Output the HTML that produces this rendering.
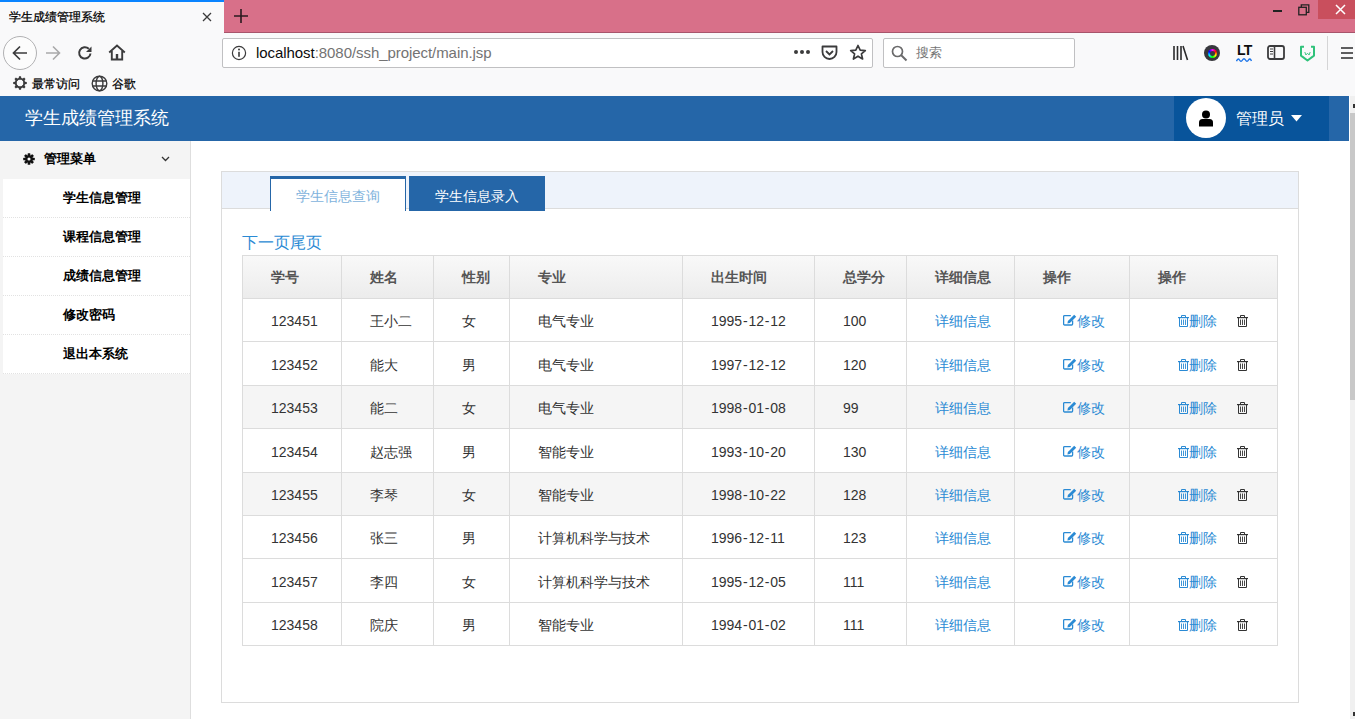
<!DOCTYPE html>
<html><head><meta charset="utf-8">
<style>
*{box-sizing:border-box;margin:0;padding:0}
html,body{width:1355px;height:719px;overflow:hidden;background:#fff;font-family:"Liberation Sans",sans-serif;position:relative}
.abs{position:absolute;white-space:nowrap}
svg{display:block}
.hd{background:linear-gradient(#f9f9f9,#ececec)}
.vl{width:1px;background:#dcdcdc}
.hl{height:1px;background:#dcdcdc}
.th{font-size:14px;font-weight:bold;color:#555}
.td{font-size:14px;color:#333}
.lk{color:#2a8ad4}
.ic{display:inline-block;vertical-align:-1px}
.mi{position:absolute;left:3px;width:187px;height:39px;background:#fff;font-size:13px;font-weight:bold;color:#000;padding-left:60px;line-height:38px;border-bottom:1px dotted #e2e2e2}
</style></head><body>
<svg width="0" height="0" style="position:absolute">
 <defs>
  <g id="ied"><path d="M9.6 6.5V10Q9.6 11 8.6 11H1.6Q0.6 11 0.6 10V2.6Q0.6 1.6 1.6 1.6H7.8" fill="none" stroke="currentColor" stroke-width="1.3"/><path d="M4.4 9.4L4.9 7.1L11.2 0.8L13.2 2.8L6.9 9.1Z" fill="currentColor"/></g>
  <g id="itr"><path d="M3.5 2.2V0.5H7.5V2.2" fill="none" stroke="currentColor" stroke-width="1"/><rect x="0" y="2" width="11" height="1.2" fill="currentColor"/><path d="M1.5 3V11.5H9.5V3" fill="none" stroke="currentColor" stroke-width="1"/><path d="M3.5 4.5V10M5.5 4.5V10M7.5 4.5V10" stroke="currentColor" stroke-width="0.9"/></g>
 </defs>
</svg>

<!-- ===== browser tab strip ===== -->
<div class="abs" style="left:0;top:0;width:1355px;height:33px;background:#d87089;border-bottom:1px solid #a7546b"></div>
<div class="abs" style="left:0;top:0;width:224px;height:33px;background:#f9f9fa;border-top:2px solid #0a84ff"></div>
<div class="abs" style="left:9px;top:9px;font-size:12px;color:#000;line-height:16px;-webkit-text-stroke:0.25px #000">学生成绩管理系统</div>
<svg class="abs" style="left:202px;top:12px" width="10" height="10" viewBox="0 0 10 10"><path d="M1 1L9 9M9 1L1 9" stroke="#3a3a3b" stroke-width="1.3"/></svg>
<svg class="abs" style="left:234px;top:9px" width="14" height="14" viewBox="0 0 14 14"><path d="M7 0V14M0 7H14" stroke="#2a1a1f" stroke-width="1.6"/></svg>
<svg class="abs" style="left:1273px;top:10px" width="10" height="3"><rect width="9" height="2" fill="#222"/></svg>
<svg class="abs" style="left:1298px;top:4px" width="12" height="12" viewBox="0 0 12 12"><rect x="0.8" y="3.3" width="7.5" height="7.5" fill="none" stroke="#222" stroke-width="1.3"/><path d="M3.3 3.3V0.8H10.8V8.3H8.3" fill="none" stroke="#222" stroke-width="1.3"/></svg>
<div class="abs" style="left:1318px;top:0;width:37px;height:19px;background:#c94f5d"></div>
<svg class="abs" style="left:1335px;top:4px" width="11" height="11" viewBox="0 0 11 11"><path d="M1 1L10 10M10 1L1 10" stroke="#fff" stroke-width="1.5"/></svg>

<!-- ===== nav toolbar ===== -->
<div class="abs" style="left:0;top:33px;width:1355px;height:63px;background:#f9f9fa"></div>
<div class="abs" style="left:3px;top:36px;width:34px;height:34px;border-radius:50%;border:1px solid #b1b1b3;background:#fcfcfc"></div>
<svg class="abs" style="left:12px;top:45px" width="16" height="16" viewBox="0 0 16 16"><path d="M15 8H2M8 1.5L1.5 8L8 14.5" fill="none" stroke="#3b3b3c" stroke-width="1.7"/></svg>
<svg class="abs" style="left:45px;top:45px" width="16" height="16" viewBox="0 0 16 16"><path d="M1 8H14M8 1.5L14.5 8L8 14.5" fill="none" stroke="#a9a9aa" stroke-width="1.6"/></svg>
<svg class="abs" style="left:77px;top:45px" width="16" height="16" viewBox="0 0 16 16"><path d="M13.5 8.5A5.7 5.7 0 1 1 11.8 3.8" fill="none" stroke="#3b3b3c" stroke-width="2"/><path d="M14.5 1.5V7H9Z" fill="#3b3b3c"/></svg>
<svg class="abs" style="left:108px;top:44px" width="18" height="17" viewBox="0 0 18 17"><path d="M1.2 8.5L9 1.5L16.8 8.5" fill="none" stroke="#3b3b3c" stroke-width="1.9"/><path d="M3.8 7V15.5H14.2V7" fill="none" stroke="#3b3b3c" stroke-width="1.9"/><rect x="7.8" y="10" width="2.4" height="5" fill="#3b3b3c"/></svg>
<!-- url bar -->
<div class="abs" style="left:222px;top:38px;width:651px;height:30px;background:#fff;border:1px solid #c0c0c2;border-radius:2px"></div>
<svg class="abs" style="left:231px;top:45px" width="16" height="16" viewBox="0 0 16 16"><circle cx="8" cy="8" r="6.6" fill="none" stroke="#3b3b3c" stroke-width="1.2"/><rect x="7.2" y="6.8" width="1.6" height="5" fill="#3b3b3c"/><circle cx="8" cy="4.6" r="1" fill="#3b3b3c"/></svg>
<div class="abs" style="left:256px;top:44px;font-size:15px;letter-spacing:-0.06px;line-height:18px;color:#0c0c0d">localhost<span style="color:#737373">:8080/ssh_project/main.jsp</span></div>
<svg class="abs" style="left:793px;top:49px" width="18" height="6" viewBox="0 0 18 6"><circle cx="3" cy="3" r="2" fill="#3b3b3c"/><circle cx="9" cy="3" r="2" fill="#3b3b3c"/><circle cx="15" cy="3" r="2" fill="#3b3b3c"/></svg>
<svg class="abs" style="left:821px;top:45px" width="17" height="16" viewBox="0 0 17 16"><path d="M1.5 1.5H15.5V7A7 7 0 0 1 1.5 7Z" fill="none" stroke="#3b3b3c" stroke-width="1.8" stroke-linejoin="round"/><path d="M5 6L8.5 9.5L12 6" fill="none" stroke="#3b3b3c" stroke-width="1.8"/></svg>
<svg class="abs" style="left:849px;top:44px" width="18" height="17" viewBox="0 0 18 17"><path d="M9 1.5L11.2 6.2L16.3 6.6L12.4 9.9L13.6 15L9 12.2L4.4 15L5.6 9.9L1.7 6.6L6.8 6.2Z" fill="none" stroke="#3b3b3c" stroke-width="1.7" stroke-linejoin="round"/></svg>
<!-- search -->
<div class="abs" style="left:883px;top:38px;width:192px;height:30px;background:#fff;border:1px solid #c0c0c2;border-radius:2px"></div>
<svg class="abs" style="left:891px;top:45px" width="17" height="17" viewBox="0 0 17 17"><circle cx="6.5" cy="6.5" r="5" fill="none" stroke="#6a6a6b" stroke-width="1.7"/><path d="M10 10L15.5 15.5" stroke="#6a6a6b" stroke-width="2"/></svg>
<div class="abs" style="left:916px;top:44px;font-size:13px;line-height:18px;color:#737373">搜索</div>
<!-- right icons -->
<svg class="abs" style="left:1172px;top:45px" width="17" height="16" viewBox="0 0 17 16"><path d="M2 1V15M5.5 1V15M9 1V15M11 1L15.5 15" stroke="#2b2b2c" stroke-width="1.6"/></svg>
<div class="abs" style="left:1204px;top:45px;width:16px;height:16px;border-radius:50%;background:#38383d"></div>
<div class="abs" style="left:1207.5px;top:48.5px;width:9px;height:9px;border-radius:50%;background:conic-gradient(#f0f,#f00,#ff0,#0f0,#0ff,#00f,#f0f)"></div>
<div class="abs" style="left:1209.5px;top:50.5px;width:5px;height:5px;border-radius:50%;background:#38383d"></div>
<div class="abs" style="left:1237px;top:43px;font-size:14px;font-weight:bold;line-height:14px;color:#0c0c0d;letter-spacing:-0.8px">LT</div>
<svg class="abs" style="left:1236px;top:58px" width="16" height="4" viewBox="0 0 16 4"><path d="M0.5 3.2Q2 -0.5 3.5 2T6.5 2T9.5 2T12.5 2T15.5 3" fill="none" stroke="#1a73e8" stroke-width="1.4"/></svg>
<svg class="abs" style="left:1267px;top:45px" width="18" height="15" viewBox="0 0 18 15"><rect x="1" y="1" width="16" height="13" rx="2" fill="none" stroke="#3b3b3c" stroke-width="1.8"/><path d="M7.5 1V14" stroke="#3b3b3c" stroke-width="1.6"/><path d="M3 4H6M3 6.5H6M3 9H6" stroke="#3b3b3c" stroke-width="1"/></svg>
<svg class="abs" style="left:1299px;top:45px" width="17" height="17" viewBox="0 0 17 17"><path d="M5 1.8H2V10.6L8.5 15.5L15 10.6V1.8H12" fill="none" stroke="#2fc27a" stroke-width="2" stroke-linejoin="round"/><path d="M5.8 7L6.9 10L8.5 8.2L10.1 10L11.2 7" fill="none" stroke="#2fc27a" stroke-width="0.9"/></svg>
<div class="abs" style="left:1327px;top:36px;width:1px;height:34px;background:#d5d5d6"></div>
<svg class="abs" style="left:1341px;top:46px" width="12" height="14" viewBox="0 0 12 14"><path d="M0 2H12M0 7H12M0 12H12" stroke="#2b2b2c" stroke-width="1.7"/></svg>
<!-- bookmarks bar -->
<svg class="abs" style="left:12px;top:75px" width="16" height="16" viewBox="0 0 16 16"><g fill="#3b3b3c"><path d="M7 1.2H9L9.6 4.5H6.4Z" transform="rotate(0 8 8)"/><path d="M7 1.2H9L9.6 4.5H6.4Z" transform="rotate(45 8 8)"/><path d="M7 1.2H9L9.6 4.5H6.4Z" transform="rotate(90 8 8)"/><path d="M7 1.2H9L9.6 4.5H6.4Z" transform="rotate(135 8 8)"/><path d="M7 1.2H9L9.6 4.5H6.4Z" transform="rotate(180 8 8)"/><path d="M7 1.2H9L9.6 4.5H6.4Z" transform="rotate(225 8 8)"/><path d="M7 1.2H9L9.6 4.5H6.4Z" transform="rotate(270 8 8)"/><path d="M7 1.2H9L9.6 4.5H6.4Z" transform="rotate(315 8 8)"/></g><circle cx="8" cy="8" r="4.3" fill="none" stroke="#3b3b3c" stroke-width="1.7"/></svg>
<div class="abs" style="left:32px;top:76px;font-size:12px;line-height:16px;color:#000;-webkit-text-stroke:0.25px #000">最常访问</div>
<svg class="abs" style="left:91px;top:75px" width="17" height="17" viewBox="0 0 17 17"><g fill="none" stroke="#3b3b3c" stroke-width="1.4"><circle cx="8.5" cy="8.5" r="7.3"/><ellipse cx="8.5" cy="8.5" rx="3.4" ry="7.3"/><path d="M1.5 6H15.5M1.5 11H15.5"/></g></svg>
<div class="abs" style="left:112px;top:76px;font-size:12px;line-height:16px;color:#000;-webkit-text-stroke:0.25px #000">谷歌</div>

<!-- ===== page ===== -->
<div class="abs" style="left:0;top:96px;width:1349px;height:45px;background:#2566a8"></div>
<div class="abs" style="left:25px;top:106px;font-size:18px;color:#fff;line-height:24px">学生成绩管理系统</div>
<div class="abs" style="left:1174px;top:96px;width:155px;height:45px;background:#08549b"></div>
<div class="abs" style="left:1186px;top:98px;width:40px;height:40px;border-radius:50%;background:#fff"></div>
<svg class="abs" style="left:1198px;top:110px" width="16" height="17" viewBox="0 0 16 17"><circle cx="8" cy="4.5" r="4" fill="#000"/><path d="M1 16.5V12.5Q1 9 4.5 9H11.5Q15 9 15 12.5V16.5Z" fill="#000"/></svg>
<div class="abs" style="left:1236px;top:108px;font-size:16px;color:#fff;line-height:22px">管理员</div>
<svg class="abs" style="left:1291px;top:115px" width="11" height="7" viewBox="0 0 11 7"><path d="M0 0H11L5.5 6.5Z" fill="#fff"/></svg>

<!-- sidebar -->
<div class="abs" style="left:0;top:141px;width:191px;height:578px;background:#f4f4f4;border-right:1px solid #dedede"></div>
<svg class="abs" style="left:23px;top:153px" width="12" height="12" viewBox="0 0 16 16"><g fill="#111"><circle cx="8" cy="8" r="5"/><rect x="6.2" y="0.3" width="3.6" height="15.4" rx="0.8"/><rect x="0.3" y="6.2" width="15.4" height="3.6" rx="0.8"/><rect x="6.2" y="0.3" width="3.6" height="15.4" rx="0.8" transform="rotate(45 8 8)"/><rect x="6.2" y="0.3" width="3.6" height="15.4" rx="0.8" transform="rotate(-45 8 8)"/></g><circle cx="8" cy="8" r="2.1" fill="#f4f4f4"/></svg>
<div class="abs" style="left:44px;top:148px;font-size:13px;font-weight:bold;line-height:22px;color:#000">管理菜单</div>
<svg class="abs" style="left:161px;top:156px" width="9" height="6" viewBox="0 0 9 6"><path d="M1 1L4.5 4.5L8 1" fill="none" stroke="#333" stroke-width="1.3"/></svg>
<div class="mi" style="top:179px">学生信息管理</div>
<div class="mi" style="top:218px">课程信息管理</div>
<div class="mi" style="top:257px">成绩信息管理</div>
<div class="mi" style="top:296px">修改密码</div>
<div class="mi" style="top:335px">退出本系统</div>

<!-- panel -->
<div class="abs" style="left:221px;top:171px;width:1078px;height:532px;border:1px solid #dcdcdc;background:#fff"></div>
<div class="abs" style="left:222px;top:172px;width:1076px;height:37px;background:#eef3fb;border-bottom:1px solid #dcdcdc"></div>
<div class="abs" style="left:270px;top:176px;width:136px;height:35px;background:#fff;border:1px solid #2566a8;border-top:3px solid #2566a8;border-bottom:none"></div>
<div class="abs" style="left:296px;top:185px;font-size:14px;line-height:22px;color:#7eb2dc">学生信息查询</div>
<div class="abs" style="left:409px;top:176px;width:136px;height:35px;background:#2566a8"></div>
<div class="abs" style="left:435px;top:185px;font-size:14px;line-height:22px;color:#fff">学生信息录入</div>
<div class="abs" style="left:242px;top:232px;font-size:16px;line-height:22px;color:#2a8ad4">下一页尾页</div>

<div class="abs hd" style="left:242px;top:255px;width:1036px;height:43px"></div>
<div class="abs" style="left:242px;top:385px;width:1036px;height:43px;background:#f5f5f5"></div>
<div class="abs" style="left:242px;top:472px;width:1036px;height:43px;background:#f5f5f5"></div>
<div class="abs vl" style="left:242px;top:255px;height:391px"></div>
<div class="abs vl" style="left:341px;top:255px;height:391px"></div>
<div class="abs vl" style="left:433px;top:255px;height:391px"></div>
<div class="abs vl" style="left:509px;top:255px;height:391px"></div>
<div class="abs vl" style="left:682px;top:255px;height:391px"></div>
<div class="abs vl" style="left:814px;top:255px;height:391px"></div>
<div class="abs vl" style="left:906px;top:255px;height:391px"></div>
<div class="abs vl" style="left:1014px;top:255px;height:391px"></div>
<div class="abs vl" style="left:1129px;top:255px;height:391px"></div>
<div class="abs vl" style="left:1277px;top:255px;height:391px"></div>
<div class="abs hl" style="left:242px;top:255px;width:1036px"></div>
<div class="abs hl" style="left:242px;top:298px;width:1036px"></div>
<div class="abs hl" style="left:242px;top:341px;width:1036px"></div>
<div class="abs hl" style="left:242px;top:385px;width:1036px"></div>
<div class="abs hl" style="left:242px;top:428px;width:1036px"></div>
<div class="abs hl" style="left:242px;top:472px;width:1036px"></div>
<div class="abs hl" style="left:242px;top:515px;width:1036px"></div>
<div class="abs hl" style="left:242px;top:558px;width:1036px"></div>
<div class="abs hl" style="left:242px;top:602px;width:1036px"></div>
<div class="abs hl" style="left:242px;top:645px;width:1036px"></div>
<div class="abs th" style="left:271px;top:256px;line-height:43px">学号</div>
<div class="abs th" style="left:370px;top:256px;line-height:43px">姓名</div>
<div class="abs th" style="left:462px;top:256px;line-height:43px">性别</div>
<div class="abs th" style="left:538px;top:256px;line-height:43px">专业</div>
<div class="abs th" style="left:711px;top:256px;line-height:43px">出生时间</div>
<div class="abs th" style="left:843px;top:256px;line-height:43px">总学分</div>
<div class="abs th" style="left:935px;top:256px;line-height:43px">详细信息</div>
<div class="abs th" style="left:1043px;top:256px;line-height:43px">操作</div>
<div class="abs th" style="left:1158px;top:256px;line-height:43px">操作</div>
<div class="abs td" style="left:271px;top:300px;line-height:43px">123451</div>
<div class="abs td" style="left:370px;top:300px;line-height:43px">王小二</div>
<div class="abs td" style="left:462px;top:300px;line-height:43px">女</div>
<div class="abs td" style="left:538px;top:300px;line-height:43px">电气专业</div>
<div class="abs td" style="left:711px;top:300px;line-height:43px">1995<span style="margin:0 0.8px">-</span>12<span style="margin:0 0.8px">-</span>12</div>
<div class="abs td" style="left:843px;top:300px;line-height:43px">100</div>
<div class="abs td lk" style="left:935px;top:300px;line-height:43px">详细信息</div>
<div class="abs td lk" style="left:1063px;top:300px;line-height:43px"><svg class="ic" style="vertical-align:0" width="14" height="12" viewBox="0 0 14 12"><use href="#ied"/></svg>修改</div>
<div class="abs td lk" style="left:1178px;top:300px;line-height:43px"><svg class="ic" width="11" height="12" viewBox="0 0 11 12"><use href="#itr"/></svg>删除</div>
<div class="abs td" style="left:1237px;top:300px;line-height:43px;color:#333"><svg class="ic" width="11" height="12" viewBox="0 0 11 12"><use href="#itr"/></svg></div>
<div class="abs td" style="left:271px;top:343px;line-height:44px">123452</div>
<div class="abs td" style="left:370px;top:343px;line-height:44px">能大</div>
<div class="abs td" style="left:462px;top:343px;line-height:44px">男</div>
<div class="abs td" style="left:538px;top:343px;line-height:44px">电气专业</div>
<div class="abs td" style="left:711px;top:343px;line-height:44px">1997<span style="margin:0 0.8px">-</span>12<span style="margin:0 0.8px">-</span>12</div>
<div class="abs td" style="left:843px;top:343px;line-height:44px">120</div>
<div class="abs td lk" style="left:935px;top:343px;line-height:44px">详细信息</div>
<div class="abs td lk" style="left:1063px;top:343px;line-height:44px"><svg class="ic" style="vertical-align:0" width="14" height="12" viewBox="0 0 14 12"><use href="#ied"/></svg>修改</div>
<div class="abs td lk" style="left:1178px;top:343px;line-height:44px"><svg class="ic" width="11" height="12" viewBox="0 0 11 12"><use href="#itr"/></svg>删除</div>
<div class="abs td" style="left:1237px;top:343px;line-height:44px;color:#333"><svg class="ic" width="11" height="12" viewBox="0 0 11 12"><use href="#itr"/></svg></div>
<div class="abs td" style="left:271px;top:387px;line-height:43px">123453</div>
<div class="abs td" style="left:370px;top:387px;line-height:43px">能二</div>
<div class="abs td" style="left:462px;top:387px;line-height:43px">女</div>
<div class="abs td" style="left:538px;top:387px;line-height:43px">电气专业</div>
<div class="abs td" style="left:711px;top:387px;line-height:43px">1998<span style="margin:0 0.8px">-</span>01<span style="margin:0 0.8px">-</span>08</div>
<div class="abs td" style="left:843px;top:387px;line-height:43px">99</div>
<div class="abs td lk" style="left:935px;top:387px;line-height:43px">详细信息</div>
<div class="abs td lk" style="left:1063px;top:387px;line-height:43px"><svg class="ic" style="vertical-align:0" width="14" height="12" viewBox="0 0 14 12"><use href="#ied"/></svg>修改</div>
<div class="abs td lk" style="left:1178px;top:387px;line-height:43px"><svg class="ic" width="11" height="12" viewBox="0 0 11 12"><use href="#itr"/></svg>删除</div>
<div class="abs td" style="left:1237px;top:387px;line-height:43px;color:#333"><svg class="ic" width="11" height="12" viewBox="0 0 11 12"><use href="#itr"/></svg></div>
<div class="abs td" style="left:271px;top:430px;line-height:44px">123454</div>
<div class="abs td" style="left:370px;top:430px;line-height:44px">赵志强</div>
<div class="abs td" style="left:462px;top:430px;line-height:44px">男</div>
<div class="abs td" style="left:538px;top:430px;line-height:44px">智能专业</div>
<div class="abs td" style="left:711px;top:430px;line-height:44px">1993<span style="margin:0 0.8px">-</span>10<span style="margin:0 0.8px">-</span>20</div>
<div class="abs td" style="left:843px;top:430px;line-height:44px">130</div>
<div class="abs td lk" style="left:935px;top:430px;line-height:44px">详细信息</div>
<div class="abs td lk" style="left:1063px;top:430px;line-height:44px"><svg class="ic" style="vertical-align:0" width="14" height="12" viewBox="0 0 14 12"><use href="#ied"/></svg>修改</div>
<div class="abs td lk" style="left:1178px;top:430px;line-height:44px"><svg class="ic" width="11" height="12" viewBox="0 0 11 12"><use href="#itr"/></svg>删除</div>
<div class="abs td" style="left:1237px;top:430px;line-height:44px;color:#333"><svg class="ic" width="11" height="12" viewBox="0 0 11 12"><use href="#itr"/></svg></div>
<div class="abs td" style="left:271px;top:474px;line-height:43px">123455</div>
<div class="abs td" style="left:370px;top:474px;line-height:43px">李琴</div>
<div class="abs td" style="left:462px;top:474px;line-height:43px">女</div>
<div class="abs td" style="left:538px;top:474px;line-height:43px">智能专业</div>
<div class="abs td" style="left:711px;top:474px;line-height:43px">1998<span style="margin:0 0.8px">-</span>10<span style="margin:0 0.8px">-</span>22</div>
<div class="abs td" style="left:843px;top:474px;line-height:43px">128</div>
<div class="abs td lk" style="left:935px;top:474px;line-height:43px">详细信息</div>
<div class="abs td lk" style="left:1063px;top:474px;line-height:43px"><svg class="ic" style="vertical-align:0" width="14" height="12" viewBox="0 0 14 12"><use href="#ied"/></svg>修改</div>
<div class="abs td lk" style="left:1178px;top:474px;line-height:43px"><svg class="ic" width="11" height="12" viewBox="0 0 11 12"><use href="#itr"/></svg>删除</div>
<div class="abs td" style="left:1237px;top:474px;line-height:43px;color:#333"><svg class="ic" width="11" height="12" viewBox="0 0 11 12"><use href="#itr"/></svg></div>
<div class="abs td" style="left:271px;top:517px;line-height:43px">123456</div>
<div class="abs td" style="left:370px;top:517px;line-height:43px">张三</div>
<div class="abs td" style="left:462px;top:517px;line-height:43px">男</div>
<div class="abs td" style="left:538px;top:517px;line-height:43px">计算机科学与技术</div>
<div class="abs td" style="left:711px;top:517px;line-height:43px">1996<span style="margin:0 0.8px">-</span>12<span style="margin:0 0.8px">-</span>11</div>
<div class="abs td" style="left:843px;top:517px;line-height:43px">123</div>
<div class="abs td lk" style="left:935px;top:517px;line-height:43px">详细信息</div>
<div class="abs td lk" style="left:1063px;top:517px;line-height:43px"><svg class="ic" style="vertical-align:0" width="14" height="12" viewBox="0 0 14 12"><use href="#ied"/></svg>修改</div>
<div class="abs td lk" style="left:1178px;top:517px;line-height:43px"><svg class="ic" width="11" height="12" viewBox="0 0 11 12"><use href="#itr"/></svg>删除</div>
<div class="abs td" style="left:1237px;top:517px;line-height:43px;color:#333"><svg class="ic" width="11" height="12" viewBox="0 0 11 12"><use href="#itr"/></svg></div>
<div class="abs td" style="left:271px;top:560px;line-height:44px">123457</div>
<div class="abs td" style="left:370px;top:560px;line-height:44px">李四</div>
<div class="abs td" style="left:462px;top:560px;line-height:44px">女</div>
<div class="abs td" style="left:538px;top:560px;line-height:44px">计算机科学与技术</div>
<div class="abs td" style="left:711px;top:560px;line-height:44px">1995<span style="margin:0 0.8px">-</span>12<span style="margin:0 0.8px">-</span>05</div>
<div class="abs td" style="left:843px;top:560px;line-height:44px">111</div>
<div class="abs td lk" style="left:935px;top:560px;line-height:44px">详细信息</div>
<div class="abs td lk" style="left:1063px;top:560px;line-height:44px"><svg class="ic" style="vertical-align:0" width="14" height="12" viewBox="0 0 14 12"><use href="#ied"/></svg>修改</div>
<div class="abs td lk" style="left:1178px;top:560px;line-height:44px"><svg class="ic" width="11" height="12" viewBox="0 0 11 12"><use href="#itr"/></svg>删除</div>
<div class="abs td" style="left:1237px;top:560px;line-height:44px;color:#333"><svg class="ic" width="11" height="12" viewBox="0 0 11 12"><use href="#itr"/></svg></div>
<div class="abs td" style="left:271px;top:604px;line-height:43px">123458</div>
<div class="abs td" style="left:370px;top:604px;line-height:43px">院庆</div>
<div class="abs td" style="left:462px;top:604px;line-height:43px">男</div>
<div class="abs td" style="left:538px;top:604px;line-height:43px">智能专业</div>
<div class="abs td" style="left:711px;top:604px;line-height:43px">1994<span style="margin:0 0.8px">-</span>01<span style="margin:0 0.8px">-</span>02</div>
<div class="abs td" style="left:843px;top:604px;line-height:43px">111</div>
<div class="abs td lk" style="left:935px;top:604px;line-height:43px">详细信息</div>
<div class="abs td lk" style="left:1063px;top:604px;line-height:43px"><svg class="ic" style="vertical-align:0" width="14" height="12" viewBox="0 0 14 12"><use href="#ied"/></svg>修改</div>
<div class="abs td lk" style="left:1178px;top:604px;line-height:43px"><svg class="ic" width="11" height="12" viewBox="0 0 11 12"><use href="#itr"/></svg>删除</div>
<div class="abs td" style="left:1237px;top:604px;line-height:43px;color:#333"><svg class="ic" width="11" height="12" viewBox="0 0 11 12"><use href="#itr"/></svg></div>

<!-- scrollbar -->
<div class="abs" style="left:1350px;top:96px;width:5px;height:623px;background:#f0f0f0"></div>
<div class="abs" style="left:1350px;top:113px;width:5px;height:287px;background:#c8c8c8"></div>
<div class="abs" style="left:1353px;top:104px;width:2px;height:4px;background:#333"></div>
<div class="abs" style="left:1353px;top:712px;width:2px;height:4px;background:#333"></div>
</body></html>
